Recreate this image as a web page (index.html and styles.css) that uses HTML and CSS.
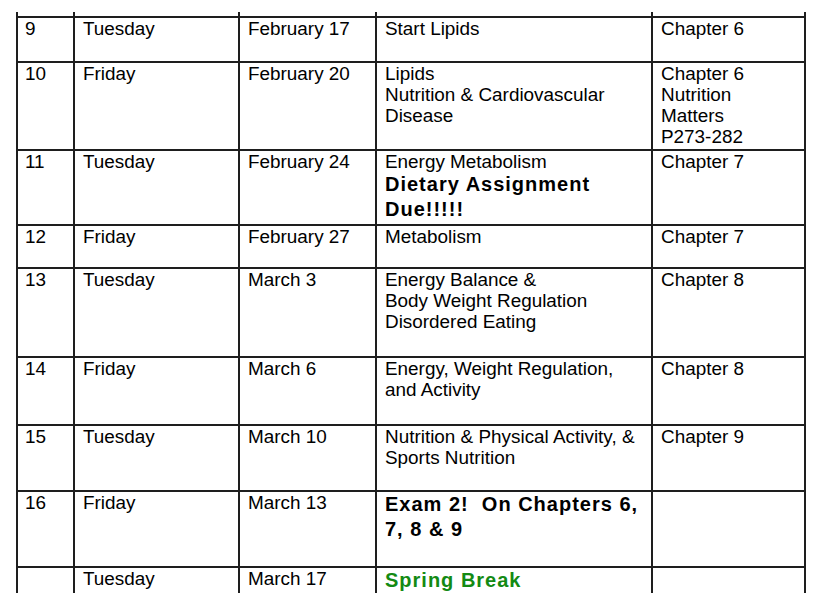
FILE: index.html
```html
<!DOCTYPE html>
<html lang="en">
<head>
<meta charset="utf-8">
<title>Course Schedule</title>
<link rel="stylesheet" href="styles.css">
</head>
<body>
<div class="schedule">
  <div class="row h-prev">
    <div class="cell"></div><div class="cell"></div><div class="cell"></div><div class="cell"></div><div class="cell"></div>
  </div>
  <div class="row h45">
    <div class="cell num">9</div><div class="cell">Tuesday</div><div class="cell">February 17</div><div class="cell topic">Start Lipids</div><div class="cell">Chapter 6</div>
  </div>
  <div class="row h88">
    <div class="cell num">10</div><div class="cell">Friday</div><div class="cell">February 20</div><div class="cell topic">Lipids<br>Nutrition &amp; Cardiovascular Disease</div><div class="cell">Chapter 6<br>Nutrition<br>Matters<br>P273-282</div>
  </div>
  <div class="row h75">
    <div class="cell num">11</div><div class="cell">Tuesday</div><div class="cell">February 24</div><div class="cell topic">Energy Metabolism<br><strong class="emph">Dietary Assignment Due!!!!!</strong></div><div class="cell">Chapter 7</div>
  </div>
  <div class="row h43">
    <div class="cell num">12</div><div class="cell">Friday</div><div class="cell">February 27</div><div class="cell topic">Metabolism</div><div class="cell">Chapter 7</div>
  </div>
  <div class="row h89">
    <div class="cell num">13</div><div class="cell">Tuesday</div><div class="cell">March 3</div><div class="cell topic">Energy Balance &amp;<br>Body Weight Regulation<br>Disordered Eating</div><div class="cell">Chapter 8</div>
  </div>
  <div class="row h68">
    <div class="cell num">14</div><div class="cell">Friday</div><div class="cell">March 6</div><div class="cell topic">Energy, Weight Regulation, and Activity</div><div class="cell">Chapter 8</div>
  </div>
  <div class="row h66">
    <div class="cell num">15</div><div class="cell">Tuesday</div><div class="cell">March 10</div><div class="cell topic">Nutrition &amp; Physical Activity, &amp; Sports Nutrition</div><div class="cell">Chapter 9</div>
  </div>
  <div class="row h76">
    <div class="cell num">16</div><div class="cell">Friday</div><div class="cell">March 13</div><div class="cell topic"><strong class="emph">Exam 2!&nbsp; On Chapters 6, 7, 8 &amp; 9</strong></div><div class="cell"></div>
  </div>
  <div class="row h25 last">
    <div class="cell num"></div><div class="cell">Tuesday</div><div class="cell">March 17</div><div class="cell topic"><strong class="emph green">Spring Break</strong></div><div class="cell"></div>
  </div>
</div>
</body>
</html>
```

FILE: styles.css
```css
html, body {
  margin: 0;
  padding: 0;
  background: #ffffff;
}

body {
  padding: 12px 0 0 16px;
  font-family: "Liberation Sans", Arial, sans-serif;
  font-size: 18.9px;
  line-height: 21px;
  color: #000000;
}

.schedule {
  width: 790px;
  border-left: 2px solid #1e1e1e;
  box-sizing: border-box;
}

.row {
  display: grid;
  grid-template-columns: 57px 165px 137px 276px 153px;
  box-sizing: border-box;
  border-bottom: 2px solid #1e1e1e;
}

.row.last {
  border-bottom: none;
}

.cell {
  box-sizing: border-box;
  border-right: 2px solid #1e1e1e;
  padding: 0 6px 0 8px;
  overflow: hidden;
}

.cell.num {
  padding-left: 7px;
}

.cell.topic {
  padding-right: 8px;
}

.emph {
  font-weight: bold;
  font-size: 20px;
  line-height: 25px;
  letter-spacing: 1px;
}

.green {
  color: #138a13;
}

.h-prev { height: 6px; }
.h45 { height: 45px; }
.h88 { height: 88px; }
.h75 { height: 75px; }
.h43 { height: 43px; }
.h89 { height: 89px; }
.h68 { height: 68px; }
.h66 { height: 66px; }
.h76 { height: 76px; }
.h25 { height: 25px; }
```
